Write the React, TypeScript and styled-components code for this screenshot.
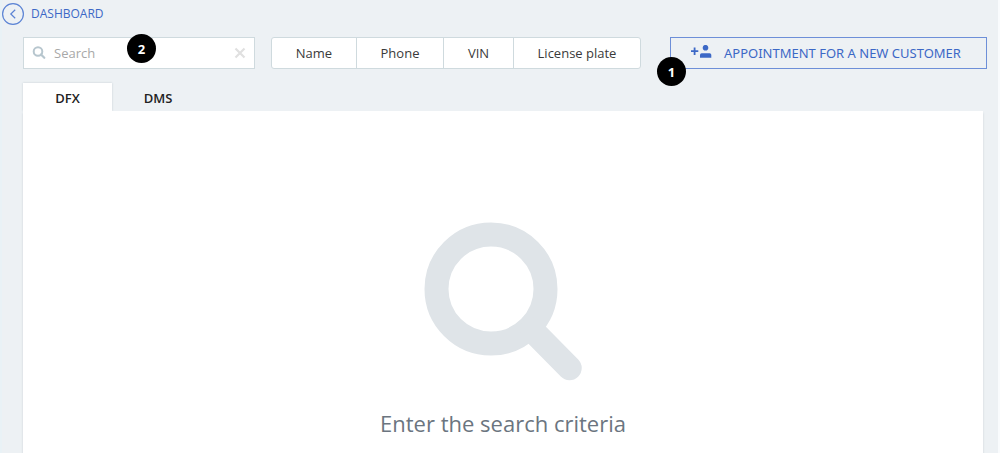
import React, { useState } from "react";
import styled, { createGlobalStyle } from "styled-components";

const blue = "#3c68c6";
const line = "#cfdade";

const GlobalStyle = createGlobalStyle`
  *, *::before, *::after { box-sizing: border-box; }
  html, body, #root { height: 100%; }
  body {
    margin: 0;
    background: #edf1f4;
    color: #3a3a3a;
    font-family: "Open Sans", "Noto Sans", sans-serif;
    font-size: 13px;
  }
  button, input { font: inherit; color: inherit; }
`;

const Page = styled.div`
  display: flex;
  flex-direction: column;
  min-height: 100%;
  border-left: 2px solid #e9f2f6;
  border-right: 2px solid #f9fbfd;
`;

const Header = styled.header`
  display: flex;
  align-items: center;
  gap: 7px;
  height: 24px;
  margin-top: 2px;
`;

const BackButton = styled.button`
  display: flex;
  width: 22px;
  height: 22px;
  padding: 0;
  border: 0;
  background: none;
`;

const Title = styled.h1`
  margin: 0;
  color: ${blue};
  font-size: 12px;
  font-weight: 400;
  line-height: 24px;
`;

const Toolbar = styled.div`
  display: flex;
  align-items: center;
  gap: 16px;
  margin: 11px 11px 0 21px;
`;

const SearchBox = styled.div`
  position: relative;
  display: flex;
  align-items: center;
  gap: 8px;
  width: 232px;
  height: 32px;
  padding: 0 8px;
  border: 1px solid ${line};
  background: #fff;
`;

const SearchInput = styled.input`
  flex: 1;
  min-width: 0;
  padding: 0;
  border: 0;
  outline: 0;
  background: none;
  &::placeholder { color: #a8a8a8; opacity: 1; }
`;

const ClearButton = styled.button`
  display: flex;
  padding: 0;
  border: 0;
  background: none;
`;

const Group = styled.div`
  display: flex;
  height: 32px;
  border: 1px solid ${line};
  border-radius: 3px;
  background: #fff;
  overflow: hidden;
`;

const GroupButton = styled.button<{ $width: number }>`
  width: ${(p) => p.$width}px;
  padding: 0;
  border: 0;
  background: none;
  white-space: nowrap;
  & + & { border-left: 1px solid ${line}; }
`;

const Action = styled.div`
  position: relative;
  margin-left: auto;
`;

const ActionButton = styled.button`
  display: flex;
  align-items: center;
  gap: 12px;
  min-width: 317px;
  height: 32px;
  padding: 0 20px;
  border: 1px solid #6d8fd8;
  background: none;
  color: ${blue};
  font-family: "Noto Sans", "Open Sans", sans-serif;
  white-space: nowrap;
`;

const Badge = styled.span<{ $left: number; $top: number }>`
  position: absolute;
  left: ${(p) => p.$left}px;
  top: ${(p) => p.$top}px;
  display: flex;
  align-items: center;
  justify-content: center;
  width: 29px;
  height: 29px;
  border-radius: 50%;
  background: #000;
  color: #fff;
  font-weight: 700;
`;

const Tabs = styled.div`
  display: flex;
  height: 28px;
  margin: 14px 15px 0 21px;
`;

const Tab = styled.button<{ $active: boolean }>`
  width: ${(p) => (p.$active ? 89 : 92)}px;
  padding: 2px 0 0;
  border: 0;
  background: ${(p) => (p.$active ? "#fff" : "none")};
  box-shadow: ${(p) => (p.$active ? "0 0 2px #c3cdd3" : "none")};
  color: #222;
  font-weight: 600;
`;

const Panel = styled.main`
  position: relative;
  flex: 1;
  display: flex;
  flex-direction: column;
  align-items: center;
  gap: 24px;
  margin: 0 15px 0 21px;
  padding-top: 111px;
  background: #fff;
  box-shadow: 0 2px 2px #c9d1d6;
`;

const Message = styled.p`
  margin: 0;
  color: #6b7580;
  font-size: 22px;
  line-height: 36px;
`;

const filters = [
  { label: "Name", width: 84 },
  { label: "Phone", width: 87 },
  { label: "VIN", width: 70 },
  { label: "License plate", width: 127 },
];

const Magnifier = () => (
  <svg width="158" height="159" viewBox="0 0 158 159" fill="none" stroke="#dfe4e8" aria-hidden="true">
    <circle cx="67" cy="67" r="54.5" strokeWidth="24" />
    <path d="M108 108 145.500 146" strokeWidth="24.500" strokeLinecap="round" />
  </svg>
);

export default function App() {
  const [query, setQuery] = useState("");
  const [tab, setTab] = useState("DFX");

  return (
    <>
      <GlobalStyle />
      <Page>
        <Header>
          <BackButton aria-label="Back">
            <svg width="22" height="22" viewBox="0 0 22 22" fill="none" stroke="#5b83d4">
              <circle cx="11" cy="11" r="10.4" strokeWidth="1.2" />
              <path d="M13.200 6.800 8.800 11l4.400 4.200" strokeWidth="1.2" />
            </svg>
          </BackButton>
          <Title>DASHBOARD</Title>
        </Header>
        <Toolbar>
          <SearchBox>
            <svg width="14" height="14" viewBox="0 0 14 14" fill="none" stroke="#b7c6ce" aria-hidden="true">
              <circle cx="6" cy="5.500" r="4.300" strokeWidth="2" />
              <path d="m9 8.500 3.300 3.300" strokeWidth="2.200" strokeLinecap="round" />
            </svg>
            <SearchInput
              aria-label="Search"
              placeholder="Search"
              value={query}
              onChange={(e) => setQuery(e.target.value)}
            />
            <ClearButton aria-label="Clear search" onClick={() => setQuery("")}>
              <svg width="12" height="12" viewBox="0 0 12 12" stroke="#e0e0e0" strokeWidth="2.200">
                <path d="m1.500 1.500 9 9m0-9-9 9" />
              </svg>
            </ClearButton>
            <Badge $left={103} $top={-4}>2</Badge>
          </SearchBox>
          <Group>
            {filters.map((f) => (
              <GroupButton key={f.label} $width={f.width}>{f.label}</GroupButton>
            ))}
          </Group>
          <Action>
            <ActionButton>
              <svg width="21" height="16" viewBox="0 0 21 16" fill={blue} aria-hidden="true">
                <path d="M0 5.300h2.700V2.500h1.800v2.800h2.800v1.800H4.500v2.800H2.700V7.100H0z" />
                <circle cx="14.500" cy="2.700" r="2.800" />
                <path d="M9 12.800V10q0-1.700 1.700-1.700h7.900q1.700 0 1.700 1.700v2.800z" />
              </svg>
              APPOINTMENT FOR A NEW CUSTOMER
            </ActionButton>
            <Badge $left={-13} $top={20}>1</Badge>
          </Action>
        </Toolbar>
        <Tabs role="tablist">
          {["DFX", "DMS"].map((t) => (
            <Tab key={t} role="tab" aria-selected={tab === t} $active={tab === t} onClick={() => setTab(t)}>
              {t}
            </Tab>
          ))}
        </Tabs>
        <Panel>
          <Magnifier />
          <Message>Enter the search criteria</Message>
        </Panel>
      </Page>
    </>
  );
}
